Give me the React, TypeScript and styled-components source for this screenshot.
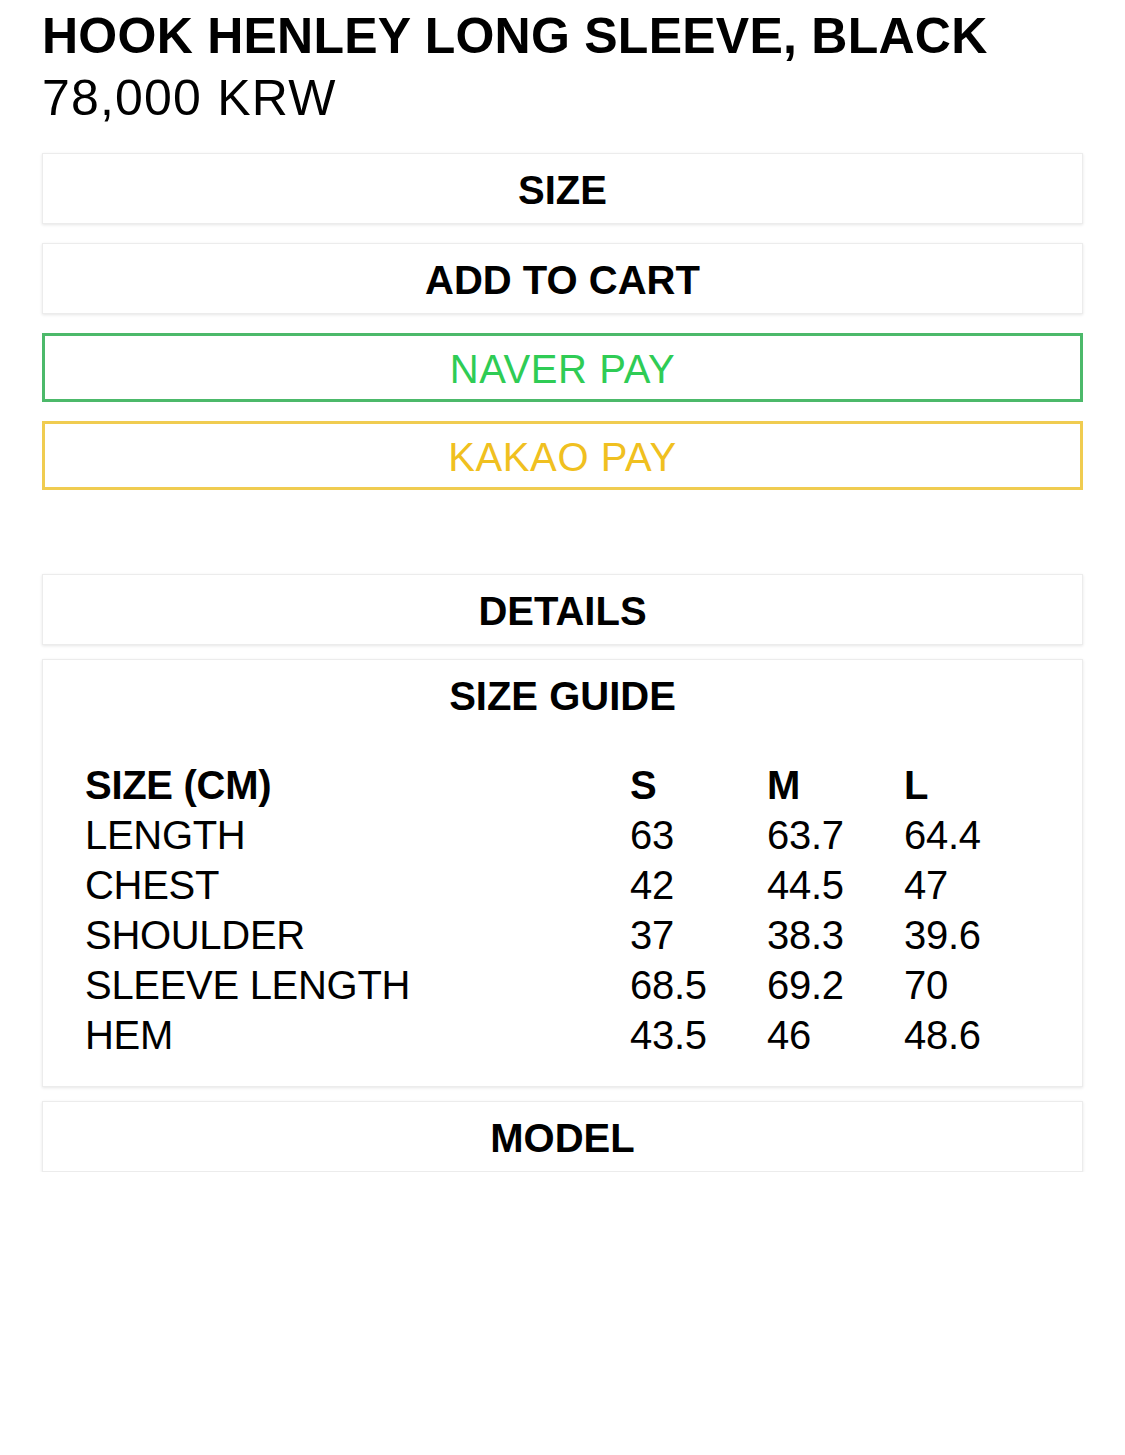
import React from "react";
import styled, { createGlobalStyle } from "styled-components";

const Global = createGlobalStyle`
  html, body { margin: 0; padding: 0; background: #fff; }
  body { font-family: "Liberation Sans", Arial, Helvetica, sans-serif; color: #000; }
`;

const Page = styled.div`
  padding: 5px 42px 0 42px;
  width: 1041px;
`;

const Title = styled.h1`
  margin: 0;
  font-size: 50px;
  line-height: 62px;
  font-weight: 700;
  letter-spacing: 0.25px;
`;

const Price = styled.div`
  font-size: 50px;
  line-height: 62px;
  font-weight: 400;
  letter-spacing: 1.2px;
`;

const Group = styled.div<{ $gap: number; $top: number }>`
  display: flex;
  flex-direction: column;
  gap: ${(p) => p.$gap}px;
  margin-top: ${(p) => p.$top}px;
`;

const Panel = styled.div`
  box-sizing: border-box;
  border: 1px solid #ececec;
  box-shadow: 0 1px 3px rgba(0, 0, 0, 0.1);
  background: #fff;
`;

const Button = styled.div<{ $variant?: "plain" | "naver" | "kakao" }>`
  box-sizing: border-box;
  height: ${(p) => (p.$variant === "plain" || !p.$variant ? 71 : 69)}px;
  padding-top: 3px;
  display: flex;
  align-items: center;
  justify-content: center;
  font-size: 40px;
  background: #fff;
  ${(p) =>
    p.$variant === "naver"
      ? `border: 3px solid #4cb96a; color: #2fcc55; font-weight: 400; letter-spacing: 0.6px;`
      : p.$variant === "kakao"
      ? `border: 3px solid #f0cc50; color: #f0c020; font-weight: 400; letter-spacing: 0.6px;`
      : `border: 1px solid #ececec; box-shadow: 0 1px 3px rgba(0,0,0,0.1); color: #000; font-weight: 700; letter-spacing: 0;`}
`;

const PanelHeader = styled.div`
  height: 70px;
  padding-top: 2px;
  box-sizing: border-box;
  display: flex;
  align-items: center;
  justify-content: center;
  font-size: 40px;
  font-weight: 700;
  letter-spacing: 0;
`;

const Table = styled.div`
  display: grid;
  grid-template-columns: 545px 137px 137px auto;
  padding: 30px 0 26px 42px;
  font-size: 40px;
  line-height: 50px;
  letter-spacing: -0.3px;
`;

const Cell = styled.div<{ $head?: boolean }>`
  font-weight: ${(p) => (p.$head ? 700 : 400)};
  white-space: nowrap;
`;

const rows: [string, string, string, string][] = [
  ["LENGTH", "63", "63.7", "64.4"],
  ["CHEST", "42", "44.5", "47"],
  ["SHOULDER", "37", "38.3", "39.6"],
  ["SLEEVE LENGTH", "68.5", "69.2", "70"],
  ["HEM", "43.5", "46", "48.6"],
];

export default function App() {
  return (
    <>
      <Global />
      <Page>
        <Title>HOOK HENLEY LONG SLEEVE, BLACK</Title>
        <Price>78,000 KRW</Price>
        <Group $gap={19} $top={24}>
          <Button>SIZE</Button>
          <Button>ADD TO CART</Button>
          <Button $variant="naver">NAVER PAY</Button>
          <Button $variant="kakao">KAKAO PAY</Button>
        </Group>
        <Group $gap={14} $top={84}>
          <Button>DETAILS</Button>
          <Panel>
            <PanelHeader>SIZE GUIDE</PanelHeader>
            <Table>
              <Cell $head>SIZE (CM)</Cell>
              <Cell $head>S</Cell>
              <Cell $head>M</Cell>
              <Cell $head>L</Cell>
              {rows.map((r) =>
                r.map((c, i) => <Cell key={r[0] + i}>{c}</Cell>)
              )}
            </Table>
          </Panel>
          <Button>MODEL</Button>
        </Group>
      </Page>
    </>
  );
}
